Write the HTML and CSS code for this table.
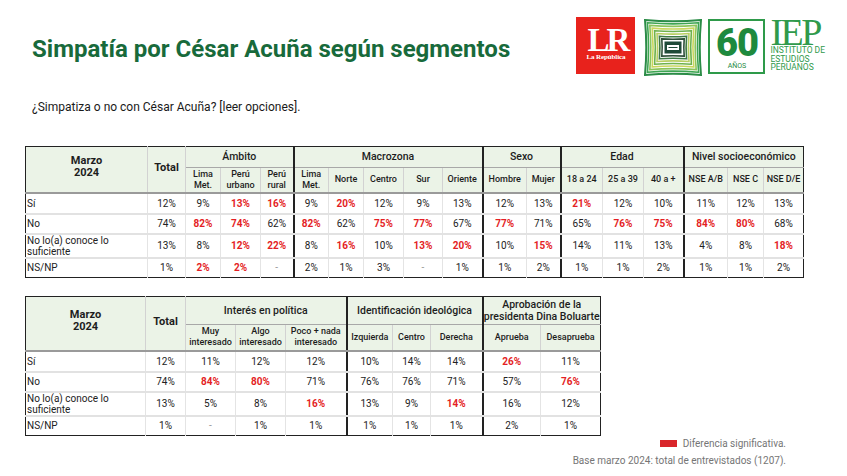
FILE: index.html
```html
<!DOCTYPE html>
<html lang="es">
<head>
<meta charset="utf-8">
<title>Simpatía por César Acuña según segmentos</title>
<link rel="stylesheet" href="styles.css">
</head>
<body>
<div class="page">
  <header class="top">
    <h1 class="title">Simpatía por César Acuña según segmentos</h1>
    <div class="logos">
      <div class="lr"><span class="lr-big">LR</span><span class="lr-small">La República</span></div>
      <svg class="sq" width="58" height="57" viewBox="0 0 58 57">
        <g fill="none" stroke-width="1.6">
          <path d="M1,1 Q29,3.5 57,1 Q54.5,28.5 57,56 Q29,53.5 1,56 Q3.5,28.5 1,1Z" stroke="#2b8c47" stroke-width="2"/>
          <path d="M3.4,3.7 Q29,5.95 54.6,3.7 Q52.35,28.5 54.6,53.3 Q29,51.05 3.4,53.3 Q5.65,28.5 3.4,3.7Z" stroke="#3ea552"/>
          <path d="M5.8,6.4 Q29,8.4 52.2,6.4 Q50.2,28.5 52.2,50.6 Q29,48.6 5.8,50.6 Q7.8,28.5 5.8,6.4Z" stroke="#8cc45b"/>
          <path d="M8.2,9.1 Q29,10.85 49.8,9.1 Q48.05,28.5 49.8,47.9 Q29,46.15 8.2,47.9 Q9.95,28.5 8.2,9.1Z" stroke="#c9d65c"/>
          <path d="M10.6,11.8 Q29,13.3 47.4,11.8 Q45.9,28.5 47.4,45.2 Q29,43.7 10.6,45.2 Q12.1,28.5 10.6,11.8Z" stroke="#6fb24c"/>
          <path d="M13,14.5 Q29,15.75 45,14.5 Q43.75,28.5 45,42.5 Q29,41.25 13,42.5 Q14.25,28.5 13,14.5Z" stroke="#b7cf62"/>
          <path d="M15.4,17.2 Q29,18.2 42.6,17.2 Q41.6,28.5 42.6,39.8 Q29,38.8 15.4,39.8 Q16.4,28.5 15.4,17.2Z" stroke="#3e7a45"/>
          <path d="M17.8,19.9 Q29,20.65 40.2,19.9 Q39.45,28.5 40.2,37.1 Q29,36.35 17.8,37.1 Q18.55,28.5 17.8,19.9Z" stroke="#2f4f3a"/>
        </g>
        <rect x="20.5" y="22.5" width="17" height="12" fill="#1f4a38"/>
        <rect x="23" y="26" width="12" height="5" fill="#ffffff"/>
        <rect x="24.5" y="28" width="9" height="1" fill="#1f4a38"/>
      </svg>
      <div class="sixty"><span class="sixty-num">60</span><span class="sixty-anos">AÑOS</span></div>
      <div class="iep"><span class="iep-big">IEP</span><span class="iep-line">INSTITUTO DE</span><span class="iep-line">ESTUDIOS</span><span class="iep-line">PERUANOS</span></div>
    </div>
  </header>

  <p class="question">¿Simpatiza o no con César Acuña? [leer opciones].</p>

  <table class="tbl t1">
    <colgroup>
      <col style="width:122px"><col style="width:38px">
      <col style="width:35px"><col style="width:40px"><col style="width:33px">
      <col style="width:35px"><col style="width:35px"><col style="width:40px"><col style="width:39px"><col style="width:40px">
      <col style="width:44px"><col style="width:34px">
      <col style="width:42px"><col style="width:41px"><col style="width:40px">
      <col style="width:44px"><col style="width:36px"><col style="width:40px">
    </colgroup>
    <thead>
      <tr class="gh r21">
        <th rowspan="2" class="lab">Marzo<br>2024</th>
        <th rowspan="2" class="tot">Total</th>
        <th colspan="3" class="d">Ámbito</th>
        <th colspan="5" class="d">Macrozona</th>
        <th colspan="2" class="d">Sexo</th>
        <th colspan="3" class="d">Edad</th>
        <th colspan="3">Nivel socioeconómico</th>
      </tr>
      <tr class="sh r25">
        <th>Lima<br>Met.</th><th>Perú<br>urbano</th><th class="d">Perú<br>rural</th>
        <th>Lima<br>Met.</th><th>Norte</th><th>Centro</th><th>Sur</th><th class="d">Oriente</th>
        <th>Hombre</th><th class="d">Mujer</th>
        <th>18 a 24</th><th>25 a 39</th><th class="d">40 a +</th>
        <th>NSE A/B</th><th>NSE C</th><th>NSE D/E</th>
      </tr>
    </thead>
    <tbody>
      <tr class="r21">
        <td class="l">Sí</td><td>12%</td>
        <td>9%</td><td class="s">13%</td><td class="s d">16%</td>
        <td>9%</td><td class="s">20%</td><td>12%</td><td>9%</td><td class="d">13%</td>
        <td>12%</td><td class="d">13%</td>
        <td class="s">21%</td><td>12%</td><td class="d">10%</td>
        <td>11%</td><td>12%</td><td>13%</td>
      </tr>
      <tr class="r20">
        <td class="l">No</td><td>74%</td>
        <td class="s">82%</td><td class="s">74%</td><td class="d">62%</td>
        <td class="s">82%</td><td>62%</td><td class="s">75%</td><td class="s">77%</td><td class="d">67%</td>
        <td class="s">77%</td><td class="d">71%</td>
        <td>65%</td><td class="s">76%</td><td class="s d">75%</td>
        <td class="s">84%</td><td class="s">80%</td><td>68%</td>
      </tr>
      <tr class="r24">
        <td class="l">No lo(a) conoce lo<br>suficiente</td><td>13%</td>
        <td>8%</td><td class="s">12%</td><td class="s d">22%</td>
        <td>8%</td><td class="s">16%</td><td>10%</td><td class="s">13%</td><td class="s d">20%</td>
        <td>10%</td><td class="s d">15%</td>
        <td>14%</td><td>11%</td><td class="d">13%</td>
        <td>4%</td><td>8%</td><td class="s">18%</td>
      </tr>
      <tr class="r20 last">
        <td class="l">NS/NP</td><td>1%</td>
        <td class="s">2%</td><td class="s">2%</td><td class="d dash">-</td>
        <td>2%</td><td>1%</td><td>3%</td><td class="dash">-</td><td class="d">1%</td>
        <td>1%</td><td class="d">2%</td>
        <td>1%</td><td>1%</td><td class="d">2%</td>
        <td>1%</td><td>1%</td><td>2%</td>
      </tr>
    </tbody>
  </table>

  <table class="tbl t2">
    <colgroup>
      <col style="width:120px"><col style="width:40px">
      <col style="width:50px"><col style="width:50px"><col style="width:61px">
      <col style="width:46px"><col style="width:38px"><col style="width:52px">
      <col style="width:58px"><col style="width:60px">
    </colgroup>
    <thead>
      <tr class="gh r28">
        <th rowspan="2" class="lab">Marzo<br>2024</th>
        <th rowspan="2" class="tot">Total</th>
        <th colspan="3" class="d">Interés en política</th>
        <th colspan="3" class="d">Identificación ideológica</th>
        <th colspan="2">Aprobación de la<br>presidenta Dina Boluarte</th>
      </tr>
      <tr class="sh r26">
        <th>Muy<br>interesado</th><th>Algo<br>interesado</th><th class="d">Poco + nada<br>interesado</th>
        <th>Izquierda</th><th>Centro</th><th class="d">Derecha</th>
        <th>Aprueba</th><th>Desaprueba</th>
      </tr>
    </thead>
    <tbody>
      <tr class="r21">
        <td class="l">Sí</td><td>12%</td>
        <td>11%</td><td>12%</td><td class="d">12%</td>
        <td>10%</td><td>14%</td><td class="d">14%</td>
        <td class="s">26%</td><td>11%</td>
      </tr>
      <tr class="r20">
        <td class="l">No</td><td>74%</td>
        <td class="s">84%</td><td class="s">80%</td><td class="d">71%</td>
        <td>76%</td><td>76%</td><td class="d">71%</td>
        <td>57%</td><td class="s">76%</td>
      </tr>
      <tr class="r24">
        <td class="l">No lo(a) conoce lo<br>suficiente</td><td>13%</td>
        <td>5%</td><td>8%</td><td class="s d">16%</td>
        <td>13%</td><td>9%</td><td class="s d">14%</td>
        <td>16%</td><td>12%</td>
      </tr>
      <tr class="r20 last">
        <td class="l">NS/NP</td><td>1%</td>
        <td class="dash">-</td><td>1%</td><td class="d">1%</td>
        <td>1%</td><td>1%</td><td class="d">1%</td>
        <td>2%</td><td>1%</td>
      </tr>
    </tbody>
  </table>

  <footer class="foot">
    <p class="legend"><span class="swatch"></span>Diferencia significativa.</p>
    <p class="base">Base marzo 2024: total de entrevistados (1207).</p>
  </footer>
</div>
</body>
</html>
```

FILE: styles.css
```css
html, body {
  margin: 0;
  padding: 0;
  background: #ffffff;
}
body {
  width: 847px;
  height: 476px;
  overflow: hidden;
  font-family: Roboto, "Liberation Sans", Arial, sans-serif;
  color: #222222;
}
.page {
  padding-left: 25px;
}

/* header */
.top {
  display: flex;
  align-items: flex-start;
  height: 76px;
}
.title {
  margin: 35px 0 0 7px;
  font-size: 24px;
  line-height: 28px;
  font-weight: 700;
  color: #186a3b;
  white-space: nowrap;
}
.logos {
  margin: 17px 22px 0 auto;
  display: flex;
  align-items: flex-start;
}
.lr {
  box-sizing: border-box;
  width: 59px;
  height: 57px;
  padding-top: 10px;
  background: #e8221c;
  color: #ffffff;
  font-family: "Liberation Serif", "Times New Roman", serif;
  font-weight: 700;
  display: flex;
  flex-direction: column;
  align-items: center;
}
.lr-big {
  font-size: 33px;
  line-height: 26px;
  letter-spacing: -3px;
  margin-right: -3px;
}
.lr-small {
  font-size: 7px;
  line-height: 8px;
  letter-spacing: -0.1px;
}
.sq {
  display: block;
  margin: 2px 0 0 9px;
}
.sixty {
  margin: 2px 0 0 6px;
  width: 53px;
  height: 51px;
  border: 2px solid #2e9a4a;
  display: flex;
  flex-direction: column;
  align-items: center;
  color: #1e8a3e;
}
.sixty-num {
  font-size: 38px;
  line-height: 38px;
  font-weight: 900;
  margin-top: 3px;
  letter-spacing: -1px;
}
.sixty-anos {
  font-size: 7px;
  line-height: 8px;
}
.iep {
  margin: 0 0 0 5px;
  display: flex;
  flex-direction: column;
  color: #2f9a4b;
}
.iep-big {
  font-family: "Liberation Serif", "Times New Roman", serif;
  font-size: 38px;
  line-height: 30px;
  letter-spacing: -2.5px;
  margin-bottom: -1px;
}
.iep-line {
  font-size: 8.5px;
  line-height: 8.7px;
  white-space: nowrap;
}

/* question */
.question {
  margin: 24px 0 0 7px;
  font-size: 12px;
  line-height: 14px;
  color: #1a1a1a;
}

/* tables */
.tbl {
  border-collapse: collapse;
  table-layout: fixed;
  border: 1px solid #222222;
}
.t1 {
  width: 778px;
  margin-top: 32px;
}
.t2 {
  width: 575px;
  margin-top: 18px;
}
.tbl th,
.tbl td {
  padding: 0;
  text-align: center;
  vertical-align: middle;
  font-size: 10px;
  line-height: 11px;
}
.tbl thead th {
  background: #ebf3e7;
  font-weight: 400;
  color: #1d1d1d;
}
.gh th {
  font-size: 10.5px;
  line-height: 12px;
  font-weight: 500;
  border-bottom: 1px solid #a8a8a8;
}
.tbl thead .gh th {
  font-weight: 500;
}
.sh th {
  font-size: 9px;
  line-height: 11px;
  border-left: 1px solid #d2d2d2;
  border-bottom: 2px solid #9a9a9a;
}
.tbl thead .sh th {
  font-weight: 500;
}
.tbl thead th.lab,
.tbl thead th.tot {
  font-weight: 700;
  font-size: 11px;
  line-height: 12px;
  border-right: 1px solid #d2d2d2;
  border-bottom: 2px solid #9a9a9a;
}
.tbl thead th.lab {
  padding-bottom: 5px;
}
.tbl thead th.tot {
  padding-bottom: 2px;
}
.tbl td {
  border-left: 1px solid #e4e4e4;
  border-bottom: 2px solid #e2e2e2;
  color: #222222;
}
.tbl td.l {
  text-align: left;
  padding-left: 1px;
  border-left: none;
}
.tbl tr.last td {
  border-bottom: none;
}
.tbl .d {
  border-right: 2px solid #222222;
}
.tbl td.s {
  color: #e41e25;
  font-weight: 700;
}
.tbl td.dash {
  color: #999999;
}
.r20 { height: 20px; }
.r21 { height: 21px; }
.r24 { height: 24px; }
.r25 { height: 25px; }
.r26 { height: 26px; }
.r28 { height: 28px; }

/* footer */
.foot {
  padding-right: 61px;
  text-align: right;
  color: #757575;
  font-size: 10px;
}
.legend {
  margin: 2px 0 0 0;
  line-height: 12px;
}
.swatch {
  display: inline-block;
  width: 17px;
  height: 7px;
  background: #d9262b;
  margin-right: 6px;
  vertical-align: 0;
}
.base {
  margin: 5px 0 0 0;
  line-height: 12px;
}
```
